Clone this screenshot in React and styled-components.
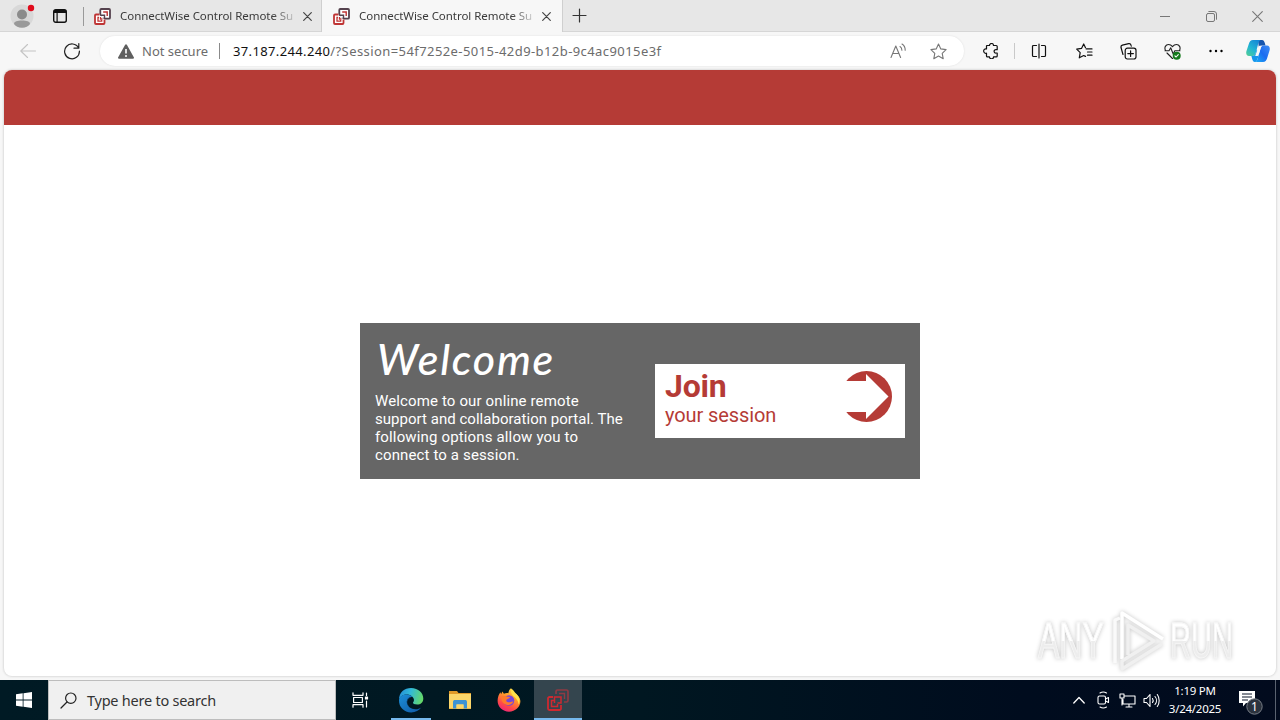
import React from "react";
import styled, { createGlobalStyle } from "styled-components";

const RED = "#b53b36";
const UI = `"Noto Sans", "Open Sans", sans-serif`;

const GlobalStyle = createGlobalStyle`
  *, *::before, *::after { box-sizing: border-box; }
  html, body { margin: 0; padding: 0; }
  body { overflow: hidden; font-family: ${UI}; }
  svg { display: block; flex: none; }
`;

const Screen = styled.div`
  width: 1280px;
  height: 720px;
  display: flex;
  flex-direction: column;
  background: #f7f7f7;
  overflow: hidden;
`;

/* ---------- tab strip ---------- */
const TabStrip = styled.header`
  height: 32px;
  flex: none;
  display: flex;
  background: #e7e7e7;
  box-shadow: inset 0 -1px 0 #d6d6d6;
`;
const StripLead = styled.div`
  width: 84px;
  display: flex;
  align-items: center;
  padding-left: 10px;
  gap: 17px;
  background: linear-gradient(#999, #999) right 7px / 1px 19px no-repeat;
`;
const Tab = styled.div`
  width: ${(p) => p.$width}px;
  height: 32px;
  display: flex;
  align-items: center;
  padding-left: ${(p) => (p.$active ? 11 : 9)}px;
  background: ${(p) => (p.$active ? "#f7f7f7" : "transparent")};
  border-left: 1px solid ${(p) => (p.$active ? "#cfcfcf" : "transparent")};
  border-right: 1px solid ${(p) => (p.$active ? "#cfcfcf" : "transparent")};
`;
const TabTitle = styled.span`
  width: 175px;
  margin-left: 9px;
  margin-right: 8px;
  white-space: nowrap;
  font-size: 11.5px;
  letter-spacing: -0.05px;
  line-height: 18px;
  color: #3a3a3a;
  mask-image: linear-gradient(90deg, #000 152px, rgba(0, 0, 0, 0.15) 175px);
`;
const NewTab = styled.div`
  padding: 8px 0 0 9px;
  flex: 1;
`;
const WindowButton = styled.div`
  width: 46px;
  display: flex;
  align-items: center;
  justify-content: center;
`;

/* ---------- toolbar ---------- */
const Toolbar = styled.nav`
  height: 38px;
  flex: none;
  display: flex;
  align-items: flex-start;
  padding: 4px 0 0 6px;
`;
const ToolButton = styled.div`
  width: ${(p) => p.$width || 44}px;
  height: 30px;
  display: flex;
  align-items: center;
  justify-content: center;
`;
const ToolDivider = styled.i`
  width: 1px;
  height: 16px;
  margin: 7px 0 0 1px;
  background: #c9c9c9;
`;
const AddressBar = styled.div`
  width: 864px;
  height: 30px;
  margin: 0 5px 0 6px;
  padding: 0 6px 0 18px;
  display: flex;
  align-items: center;
  border-radius: 15px;
  background: #fff;
  box-shadow: 0 0 2px #ddd;
  font-size: 13px;
  color: #6c6c6c;
  white-space: nowrap;
`;
const SecurityLabel = styled.span`
  width: 77px;
  margin-left: 8px;
`;
const AddressDivider = styled.i`
  width: 1px;
  height: 16px;
  background: #8a8a8a;
  margin-right: 13px;
`;
const Url = styled.span`
  flex: 1;
  letter-spacing: 0.42px;
  b { font-weight: 400; color: #111; letter-spacing: 0.36px; }
`;

/* ---------- page ---------- */
const Viewport = styled.main`
  position: relative;
  height: 606px;
  margin: 0 4px 4px;
  flex: none;
  display: flex;
  flex-direction: column;
  background: #fff;
  border-radius: 8px;
  overflow: hidden;
  box-shadow: 0 0 2px 1px #dcdcdc;
`;
const Banner = styled.div`
  height: 55px;
  flex: none;
  background: ${RED};
`;
const PageBody = styled.div`
  flex: 1;
  display: flex;
  align-items: center;
  justify-content: center;
  padding-top: 1px;
`;
const WelcomeCard = styled.section`
  width: 560px;
  height: 156px;
  padding: 0 15px;
  display: flex;
  align-items: center;
  justify-content: space-between;
  background: #666;
  color: #fff;
`;
const Intro = styled.div`
  width: 260px;
  height: 156px;
  padding-top: 9px;
`;
const Title = styled.h1`
  margin: 0 0 4px;
  padding-left: 2px;
  height: 56px;
  font: italic 500 43px/54px "Ink Free", "Segoe Print", Lato, sans-serif;
  letter-spacing: 1.8px;
`;
const Blurb = styled.p`
  margin: 0;
  font: 15px/18px Roboto, sans-serif;
  white-space: nowrap;
`;
const BlurbLine = styled.span`
  display: block;
  letter-spacing: ${(p) => p.$track}px;
`;
const JoinButton = styled.div`
  width: 250px;
  height: 74px;
  padding: 5px 13px 0 10px;
  display: flex;
  justify-content: space-between;
  background: #fff;
  color: ${RED};
  font-family: Roboto, sans-serif;
`;
const JoinTitle = styled.div`
  font-size: 32px;
  font-weight: 700;
  line-height: 34px;
  letter-spacing: -0.2px;
`;
const JoinSub = styled.div`
  font-size: 20px;
  line-height: 24px;
  letter-spacing: -0.1px;
`;

/* ---------- watermark ---------- */
const Watermark = styled.div`
  position: absolute;
  left: 1034px;
  top: 539px;
  display: flex;
  align-items: center;
  filter: drop-shadow(0 0 2px #c4c4c4);
`;
const MarkWord = styled.span`
  width: ${(p) => p.$width}px;
  font: 400 50px/64px "Liberation Sans", sans-serif;
  -webkit-text-stroke: 1px #f6f6f6;
  span {
    display: inline-block;
    transform: scaleX(${(p) => p.$squeeze});
    transform-origin: 0 50%;
    background: linear-gradient(#fff 50%, #ededed 50%);
    background-clip: text;
    color: transparent;
    white-space: nowrap;
  }
`;

/* ---------- taskbar ---------- */
const Taskbar = styled.footer`
  height: 40px;
  flex: none;
  display: flex;
  background: linear-gradient(90deg, #001a24 0%, #001721 50%, #000c1e 80%, #020b1e 100%);
  color: #fff;
`;
const TaskButton = styled.div`
  width: 48px;
  height: 40px;
  margin-right: 1px;
  display: flex;
  align-items: center;
  justify-content: center;
  background: ${(p) => (p.$active ? "#34454e" : "transparent")};
  box-shadow: ${(p) => (p.$active ? "inset 0 -2px 0 #76b9ed" : "none")};
`;
const RunningButton = styled(TaskButton)`
  background: linear-gradient(#76b9ed, #76b9ed) center bottom / 40px 2px no-repeat;
`;
const StartButton = styled(TaskButton)`
  margin-right: 0;
`;
const TaskViewButton = styled(TaskButton)`
  margin-right: 3px;
`;
const SearchBox = styled.div`
  width: 288px;
  height: 40px;
  display: flex;
  align-items: center;
  gap: 10px;
  padding-left: 11px;
  background: #f0f0f0;
  border: 1px solid #bdbdbd;
  color: #333;
  font-size: 14.5px;
`;
const SearchText = styled.span`
  white-space: nowrap;
  letter-spacing: -0.24px;
`;
const Tray = styled.div`
  margin-left: auto;
  display: flex;
  align-items: center;
  padding-right: 4px;
`;
const TrayIcon = styled.div`
  width: 24px;
  display: flex;
  justify-content: center;
`;
const Clock = styled.div`
  width: 64px;
  font-size: 11.5px;
  line-height: 18px;
  text-align: center;
  white-space: nowrap;
  letter-spacing: -0.25px;
`;
const Notifications = styled.div`
  width: 49px;
  height: 40px;
  border-right: 1px solid #5a6270;
  padding: 9px 0 0 12px;
`;

/* ---------- drawings ---------- */
const Line = ({ w = 16, h, vb, stroke = "#222", sw = 1.1, children }) => (
  <svg width={w} height={h || w} viewBox={vb || `0 0 ${w} ${h || w}`} fill="none" stroke={stroke}
    strokeWidth={sw} strokeLinecap="round" strokeLinejoin="round">{children}</svg>
);

const Profile = () => (
  <svg width="26" height="28" viewBox="0 0 26 28">
    <circle cx="12" cy="14" r="11.500" fill="#d8d8d8" />
    <circle cx="12" cy="12.500" r="5" fill="#8b8b8b" />
    <path d="M4 22c0-2.600 3.500-3.500 8-3.500s8 .9 8 3.500c-1.500 2.200-4.500 3.800-8 3.800S5.500 24.200 4 22z" fill="#999" />
    <circle cx="21" cy="6" r="3.200" fill="#e00b1c" />
  </svg>
);

const Workspaces = () => (
  <svg width="14" height="14" viewBox="0 0 14 14">
    <rect x=".7" y=".7" width="12.600" height="12.600" rx="2" fill="none" stroke="#111" strokeWidth="1.400" />
    <path d="M1 1h12v3H1zM3.500 3h1.200v10H3.500z" fill="#111" />
  </svg>
);

const RemoteLogo = () => (
  <svg width="17" height="17" viewBox="0 0 17 17" fill="none">
    <rect x="6.300" y="1" width="9.700" height="9.700" rx="1" fill="#fff" stroke="#55424e" strokeWidth="1.800" />
    <path d="M5.500 6.500H2a1 1 0 0 0-1 1v7.500a1 1 0 0 0 1 1h7.500a1 1 0 0 0 1-1V11.500" fill="#fff" stroke="#bf3434" strokeWidth="1.800" />
    <path d="M9.200 4h4v4" stroke="#bf3434" strokeWidth="1.400" />
    <path d="M6.200 7.200h4.300v3.500" stroke="#55424e" strokeWidth="1.400" />
    <path d="M5 9.500H4v3.700h3.700V12M6.500 9v2h2" stroke="#bf3434" strokeWidth="1.300" />
  </svg>
);

const RemoteAppLogo = () => (
  <svg width="22" height="22" viewBox="0 0 22 22" fill="none">
    <path d="M9 5V2.500a1.500 1.500 0 0 1 1.500-1.500h9A1.500 1.500 0 0 1 21 2.500v9a1.500 1.500 0 0 1-1.500 1.500H17" stroke="#8f3a43" strokeWidth="1.700" />
    <path d="M12 4.500h5.500V10" stroke="#8f3a43" strokeWidth="1.400" />
    <path d="M6 8H2.500A1.500 1.500 0 0 0 1 9.500v10A1.500 1.500 0 0 0 2.500 21h10a1.500 1.500 0 0 0 1.500-1.500V16" stroke="#cf2930" strokeWidth="1.800" />
    <path d="M7 11.500H4.500v6h6V15" stroke="#cf2930" strokeWidth="1.500" />
    <path d="M7.500 14V8h6.500v6h-3.500" stroke="#cf2930" strokeWidth="1.500" />
  </svg>
);

const Cross = ({ size = 9, color = "#444", sw = 1.2 }) => (
  <Line w={size} stroke={color} sw={sw}><path d={`M.7.7l${size - 1.4} ${size - 1.4}M${size - 0.7}.7L.7 ${size - 0.7}`} /></Line>
);

const Warning = () => (
  <svg width="16" height="15" viewBox="0 0 16 15">
    <path d="M7 .9a1.200 1.200 0 0 1 2 0l6.800 12.300a1 1 0 0 1-1 1.600H1.200a1 1 0 0 1-1-1.600z" fill="#5f5f5f" />
    <path d="M8 5v4.500" stroke="#fff" strokeWidth="1.600" />
    <circle cx="8" cy="12" r="1" fill="#fff" />
  </svg>
);

const Copilot = () => (
  <svg width="24" height="22" viewBox="0 0 24 22">
    <defs>
      <linearGradient id="copL" x1="0" y1="1" x2=".7" y2="0">
        <stop offset="0" stopColor="#54cf92" /><stop offset=".5" stopColor="#22b5d4" /><stop offset="1" stopColor="#1689d6" />
      </linearGradient>
      <linearGradient id="copR" x1="1" y1="0" x2="0" y2="1">
        <stop offset="0" stopColor="#3f8df5" /><stop offset=".5" stopColor="#1c6cf0" /><stop offset="1" stopColor="#1aaef5" />
      </linearGradient>
    </defs>
    <path d="M12 0h4c1.800 0 2.300 1.500 2.800 3l.7 2.500h-3.300c-2 0-2.700 1-3.300 3z" fill="#1756ae" />
    <path d="M7 0h7.500c-1.700 1-2.200 3.500-3 6.500l-1.500 5.500c-.8 2.800-1.500 4-3.500 4H3C.5 16-.2 13.500.4 11.200L2.800 4C3.700 1.200 4.700 0 7 0z" fill="url(#copL)" />
    <path d="M17 22H9.500c1.700-1 2.200-3.500 3-6.500L14 10c.8-2.800 1.500-4.500 3.500-4.500H21c2.500 0 3.200 2.500 2.600 4.800L21.200 18c-.9 2.800-1.900 4-4.200 4z" fill="url(#copR)" />
    <path d="M6.500 16c2 0 2.700-1.200 3.500-4l.8-2.700 2.300 4-.6 2.200c-.8 3-1.300 5.500-3 6.500H9c-2 0-2.300-1.500-2.800-3l-.8-3z" fill="#1596ec" />
    <path d="M12.500 6.500q.3-.8 1.100-.8h2l-2.900 9q-.4 1.300-1.400 1.300H9.200z" fill="#f7f7f7" />
  </svg>
);

const JoinArrow = () => (
  <svg width="52" height="54" viewBox="0 0 52 54">
    <circle cx="26.500" cy="27.500" r="25.500" fill={RED} />
    <path d="M0 12h26V5l22.500 22.500L26 50v-7H0z" fill="#fff" />
  </svg>
);

const PlayMark = () => (
  <svg width="62" height="64" viewBox="0 0 62 64" fill="none" stroke="#fff" strokeWidth="3.500" strokeLinejoin="round">
    <path d="M7 54V11l5-2" stroke="#fafafa" />
    <path d="M14 50V4l41 26" />
    <path d="M20 46V16l26 16-32 20v8l40-25" stroke="#f0f0f0" />
  </svg>
);

const EdgeLogo = () => (
  <svg width="26" height="26" viewBox="0 0 26 26">
    <defs>
      <linearGradient id="edgeTop" x1="0" y1=".3" x2="1" y2=".5">
        <stop offset="0" stopColor="#258fd8" /><stop offset=".45" stopColor="#32bad8" /><stop offset="1" stopColor="#65d968" />
      </linearGradient>
      <linearGradient id="edgeLow" x1="0" y1="0" x2="1" y2="1">
        <stop offset="0" stopColor="#1c8ed8" /><stop offset="1" stopColor="#1059a5" />
      </linearGradient>
    </defs>
    <path d="M1 13C1 5 6.500 1 13 1c7.500 0 12.300 5.200 12.300 10.500 0 4-2.800 6-6 6-3 0-4.500-1-4.300-2 .8-1 1.200-2 .8-3.500C15 9.500 12 7.500 8.500 7.500 4.500 7.500 1.500 10 1 13z" fill="url(#edgeTop)" />
    <path d="M1 13c.6-3.600 3.700-5.500 7.500-5.500 2.500 0 4.700.9 6 2.500-3.500-.3-5.700 1.800-5.700 4.800 0 4.500 4.200 7.500 8.700 7.500 2.300 0 4.200-.8 5.700-1.800-2 3-5.700 4.900-10 4.900C6 25.400.7 20 1 13z" fill="url(#edgeLow)" />
    <path d="M8.800 14.800c0-2.500 1.500-4.500 4.400-4.900-3.500 1.500-4.700 4.500-3.500 7.600 1.500 4 6 5.700 10.300 4.500-5.500 1.500-11.200-2.200-11.200-7.200z" fill="#174f91" />
  </svg>
);

const FolderLogo = () => (
  <svg width="22" height="20" viewBox="0 0 22 20">
    <path d="M0 1h8l1.500 2H22v16H0z" fill="#e09a28" />
    <path d="M0 4h22v14.500H0z" fill="#fbd66a" />
    <path d="M4 18.500V12c0-1.400.9-2 2-2h10c1.200 0 2 .6 2 2v6.500h-3.500v-4h-7v4z" fill="#3c93d5" />
    <path d="M7.500 14.500h7v4h-7z" fill="#fbd66a" />
  </svg>
);

const FirefoxLogo = () => (
  <svg width="24" height="24" viewBox="0 0 24 24">
    <defs>
      <linearGradient id="fox" x1=".8" y1="0" x2=".3" y2="1">
        <stop offset="0" stopColor="#ffe84a" /><stop offset=".4" stopColor="#ff9a2a" /><stop offset=".75" stopColor="#ff4848" /><stop offset="1" stopColor="#ee2578" />
      </linearGradient>
    </defs>
    <path d="M14 .3c1.200 1.300 2 2.400 2.500 3.900C20 6 23.400 9.500 23.400 13.300 23.400 19 18.300 23.700 12 23.700S.6 19 .6 12.800C.6 9 2 6 3.500 4.200l.6 2 1.300-2.700 1.500 2.300c1.500-.7 3.300-.9 4.500-.5C11.500 3.500 12.300 1.700 14 .3z" fill="url(#fox)" />
    <path d="M14.500.8c3 2.200 3 4 5.200 5.500 3 3.200 3.600 7 2 10.200-.5-4.500-3-6.500-5-8-1.800-1.400-3.500-4.500-2.200-7.700z" fill="#ffe14a" />
    <circle cx="12" cy="12.500" r="5.300" fill="#7746d8" />
    <path d="M4.500 8.500c2-.7 4.500-.6 6 .3l2.500.2c-.4 1.700-2 1.700-3.300 2.500-.9.700-.4 2.500 1.600 2.800 2.200.3 3.200-1.200 5-.7-1 3.100-4.500 4.300-7.500 3C5.500 15.300 4 12.500 4.500 8.500z" fill="#ff7a2b" />
  </svg>
);

const BrowserTab = ({ width, active }) => (
  <Tab $width={width} $active={active}>
    <RemoteLogo />
    <TabTitle>ConnectWise Control Remote Su</TabTitle>
    <Cross size={9} />
  </Tab>
);

export default function App() {
  return (
    <Screen>
      <GlobalStyle />
      <TabStrip>
        <StripLead><Profile /><Workspaces /></StripLead>
        <BrowserTab width={237} />
        <BrowserTab width={242} active />
        <NewTab><Line w={15} stroke="#333" sw={1.2}><path d="M7.500 1v13M1 7.500h13" /></Line></NewTab>
        <WindowButton><Line w={10} stroke="#777" sw={1}><path d="M0 5.500h10" /></Line></WindowButton>
        <WindowButton>
          <Line w={11} stroke="#777" sw={1}><rect x=".5" y="2.500" width="8" height="8" rx="1.500" /><path d="M2.800.5H8a2.500 2.500 0 0 1 2.500 2.500v5.300" /></Line>
        </WindowButton>
        <WindowButton><Cross size={11} color="#777" sw={1.1} /></WindowButton>
      </TabStrip>

      <Toolbar>
        <ToolButton><Line w={16} stroke="#c4c4c4"><path d="M15.500 8H.8M7.500 1.500L.8 8l6.700 6.500" /></Line></ToolButton>
        <ToolButton><Line w={18} stroke="#222" sw={1.2}><path d="M15.600 6A7.400 7.400 0 1 0 16.400 9M15.800 1.500V6.200H11" /></Line></ToolButton>
        <AddressBar>
          <Warning />
          <SecurityLabel>Not secure</SecurityLabel>
          <AddressDivider />
          <Url><b>37.187.244.240</b>/?Session=54f7252e-5015-42d9-b12b-9c4ac9015e3f</Url>
          <ToolButton $width={40}>
            <Line w={17} stroke="#777"><path d="M1 14.500L5.800 3l4.800 11.500M2.700 10.500h6.200M10 3.500c1.300.8 1.900 2 1.900 3.700M12 1c2.300 1.500 3.300 3.600 3.200 6.200" /></Line>
          </ToolButton>
          <ToolButton $width={40}>
            <Line w={17} stroke="#777"><path d="M8.500 1l2.300 4.900 5.300.7-3.900 3.700 1 5.400-4.700-2.600-4.700 2.600 1-5.400L.9 6.600l5.300-.7z" /></Line>
          </ToolButton>
        </AddressBar>
        <ToolButton>
          <Line w={16} stroke="#111" sw={1.2}><path d="M4 2.500h2.500a2 2 0 0 1 4 0h2.700q1 0 1 1v3.200h-1a1.700 1.700 0 1 0 0 3.300h1v2.900q0 1-1 1h-2.700a2 2 0 0 1-4 0H4.500q-1 0-1-1v-2.700a2.200 2.200 0 1 1 0-4.200V3z" /></Line>
        </ToolButton>
        <ToolDivider />
        <ToolButton $width={48}>
          <Line w={16} stroke="#111" sw={1.2}><path d="M8 1v14M5.500 2.500h-3q-1 0-1 1v9q0 1 1 1h3M10.500 2.500h3q1 0 1 1v9q0 1-1 1h-3" /></Line>
        </ToolButton>
        <ToolButton $width={43}>
          <Line w={17} stroke="#111" sw={1.2}><path d="M10.200 5.900H16M11.500 9H16M11.500 12.200H16M9.500 4.700L7.700 1 5.500 5.400l-4.800.7 3.500 3.500-.9 5.200 4.400-2.300 1.800.9" /></Line>
        </ToolButton>
        <ToolButton>
          <Line w={17} stroke="#111" sw={1.2}><rect x="5.200" y="5.200" width="10.800" height="10.800" rx="2.200" /><path d="M10.600 7.800v5.600M7.800 10.600h5.600M3 11.500L1 4.500a2 2 0 0 1 1.400-2.300l6.300-1.500a2 2 0 0 1 2.300 1.500l.3 1" /></Line>
        </ToolButton>
        <ToolButton>
          <Line w={17} stroke="#222" sw={1.1}><path d="M1.500 7.500C0 4.500 1.700 1.500 4.500 1.500c1.800 0 3 .9 4 2.200 1-1.300 2.200-2.200 4-2.200 2.800 0 4.500 3 3 6M3 10l5.500 5.500M1 7.800h4l1.700-3 2.600 6.400 1.500-3.400H16" /><circle cx="12.700" cy="12.700" r="4" fill="#147a1b" stroke="none" /><path d="M10.900 12.800l1.200 1.200 2.200-2.400" stroke="#fff" /></Line>
        </ToolButton>
        <ToolButton>
          <svg width="16" height="4"><circle cx="2.500" cy="2" r="1.200" /><circle cx="8" cy="2" r="1.200" /><circle cx="13.500" cy="2" r="1.200" /></svg>
        </ToolButton>
        <ToolButton $width={40}><Copilot /></ToolButton>
      </Toolbar>

      <Viewport>
        <Banner />
        <PageBody>
          <WelcomeCard>
            <Intro>
              <Title>Welcome</Title>
              <Blurb>
                <BlurbLine $track={0.13}>Welcome to our online remote</BlurbLine>
                <BlurbLine $track={0.03}>support and collaboration portal. The</BlurbLine>
                <BlurbLine $track={0.15}>following options allow you to</BlurbLine>
                <BlurbLine $track={0.13}>connect to a session.</BlurbLine>
              </Blurb>
            </Intro>
            <JoinButton>
              <div>
                <JoinTitle>Join</JoinTitle>
                <JoinSub>your session</JoinSub>
              </div>
              <JoinArrow />
            </JoinButton>
          </WelcomeCard>
        </PageBody>
        <Watermark>
          <MarkWord $width={70} $squeeze={0.64}><span>ANY</span></MarkWord>
          <PlayMark />
          <MarkWord $width={66} $squeeze={0.58}><span>RUN</span></MarkWord>
        </Watermark>
      </Viewport>

      <Taskbar>
        <StartButton>
          <svg width="16" height="16" viewBox="0 0 16 16" fill="#fff"><path d="M0 2.300L6.700 1.300v6.300H0zM7.500 1.200L16 0v7.600H7.500zM0 8.400h6.700v6.300L0 13.700zM7.500 8.400H16V16l-8.500-1.200z" /></svg>
        </StartButton>
        <SearchBox>
          <Line w={17} stroke="#222" sw={1.2}><circle cx="10.800" cy="6.200" r="5.200" /><path d="M7 10L1 16" /></Line>
          <SearchText>Type here to search</SearchText>
        </SearchBox>
        <TaskViewButton>
          <Line w={17} h={16} stroke="#fff" sw={1.2}><path d="M1 .8v2.500h10V.8M1 15.200v-2.500h10v2.500M1.600 5.500h8.800v5H1.600zM14.500 1v2.500M14.500 9v6" /><path d="M13.500 5h2v2h-2z" fill="#fff" /></Line>
        </TaskViewButton>
        <RunningButton><EdgeLogo /></RunningButton>
        <TaskButton><FolderLogo /></TaskButton>
        <TaskButton><FirefoxLogo /></TaskButton>
        <TaskButton $active><RemoteAppLogo /></TaskButton>
        <Tray>
          <TrayIcon><Line w={12} h={8} stroke="#fff" sw={1.3}><path d="M.8 7L6 1.500 11.200 7" /></Line></TrayIcon>
          <TrayIcon><Line w={13} h={18} stroke="#fff"><rect x="1" y="5" width="7.500" height="8" rx="1.500" /><path d="M8.500 8l3-1.500v5l-3-1.500M3 2c2-1.300 4.500-1.300 6.500 0M3 16c2 1.300 4.500 1.300 6.500 0" /></Line></TrayIcon>
          <TrayIcon><Line w={17} h={15} stroke="#fff"><path d="M5.500 3H16v8H4V6.500M10 11v3M7 14h6M1 1h4v4H1zM3 5v7" /></Line></TrayIcon>
          <TrayIcon><Line w={17} h={15} stroke="#fff"><path d="M1 5.500h2.500l3.500-4v12l-3.500-4H1zM9.500 5.500c.8 1.200.8 2.800 0 4M12 3.500c2 2.300 2 5.700 0 8M14.300 1.500c2.500 3.500 2.500 8.500 0 12" /></Line></TrayIcon>
          <Clock>1:19 PM<br />3/24/2025</Clock>
          <Notifications>
            <svg width="26" height="26" viewBox="0 0 26 26">
              <path d="M0 2h16v12H7l-3 3.500V14H0z" fill="#fff" />
              <path d="M3 5h10M3 8h10M3 11h6" stroke="#0a1428" strokeWidth="1.200" />
              <circle cx="15.500" cy="17.500" r="7.700" fill="#2c333e" stroke="#777d86" />
              <text x="15.500" y="22" fill="#fff" fontSize="12" textAnchor="middle" fontFamily="Noto Sans, sans-serif">1</text>
            </svg>
          </Notifications>
        </Tray>
      </Taskbar>
    </Screen>
  );
}
